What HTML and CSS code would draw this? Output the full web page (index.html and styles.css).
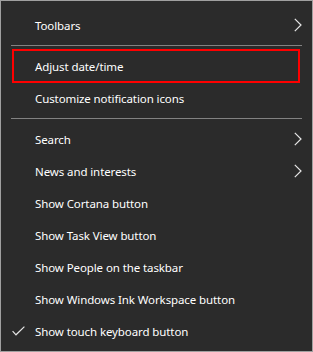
FILE: index.html
```html
<!DOCTYPE html>
<html>
<head>
<meta charset="utf-8">
<link rel="stylesheet" href="styles.css">
</head>
<body>
<div class="menu">
  <div class="item"><span class="check"></span><span class="label">Toolbars</span>
    <svg class="chev" width="8" height="14" viewBox="0 0 8 14"><polyline points="0.8,0.8 7,7 0.8,13.2" fill="none" stroke="#e6e6e6" stroke-width="1.2"/></svg></div>
  <div class="sep"></div>
  <div class="item selected"><span class="check"></span><span class="label">Adjust date/time</span></div>
  <div class="item"><span class="check"></span><span class="label">Customize notification icons</span></div>
  <div class="sep"></div>
  <div class="item"><span class="check"></span><span class="label">Search</span>
    <svg class="chev" width="8" height="14" viewBox="0 0 8 14"><polyline points="0.8,0.8 7,7 0.8,13.2" fill="none" stroke="#e6e6e6" stroke-width="1.2"/></svg></div>
  <div class="item"><span class="check"></span><span class="label">News and interests</span>
    <svg class="chev" width="8" height="14" viewBox="0 0 8 14"><polyline points="0.8,0.8 7,7 0.8,13.2" fill="none" stroke="#e6e6e6" stroke-width="1.2"/></svg></div>
  <div class="item"><span class="check"></span><span class="label">Show Cortana button</span></div>
  <div class="item"><span class="check"></span><span class="label">Show Task View button</span></div>
  <div class="item"><span class="check"></span><span class="label">Show People on the taskbar</span></div>
  <div class="item"><span class="check"></span><span class="label">Show Windows Ink Workspace button</span></div>
  <div class="item"><span class="check"><svg width="13" height="10" viewBox="0 0 13 10"><polyline points="0.6,5.2 4,8.8 12.4,0.6" fill="none" stroke="#e6e6e6" stroke-width="1.2"/></svg></span><span class="label">Show touch keyboard button</span></div>
</div>
</body>
</html>
```
FILE: styles.css
```css
html, body {
  margin: 0;
  padding: 0;
  background: #2b2b2b;
}
.menu {
  width: 313px;
  height: 352px;
  box-sizing: border-box;
  border: 1px solid #a0a0a0;
  background: #2b2b2b;
  padding: 8px 0 4px;
  font-family: "Noto Sans", "Open Sans", sans-serif;
  font-size: 11.5px;
  letter-spacing: -0.1px;
  color: #ffffff;
}
.item {
  position: relative;
  height: 32px;
  display: flex;
  align-items: center;
  padding-left: 11px;
}
.check {
  width: 23px;
  height: 10px;
  display: flex;
  align-items: center;
}
.check svg { display: block; }
.label {
  white-space: nowrap;
}
.chev {
  margin-left: auto;
  margin-right: 10px;
  display: block;
}
.selected::after {
  content: "";
  position: absolute;
  top: -1px;
  bottom: -1px;
  left: 11px;
  right: 12px;
  border: 2px solid #ff0000;
}
.sep {
  height: 1px;
  margin: 4px 10px 4px;
  background: #828282;
}
```
